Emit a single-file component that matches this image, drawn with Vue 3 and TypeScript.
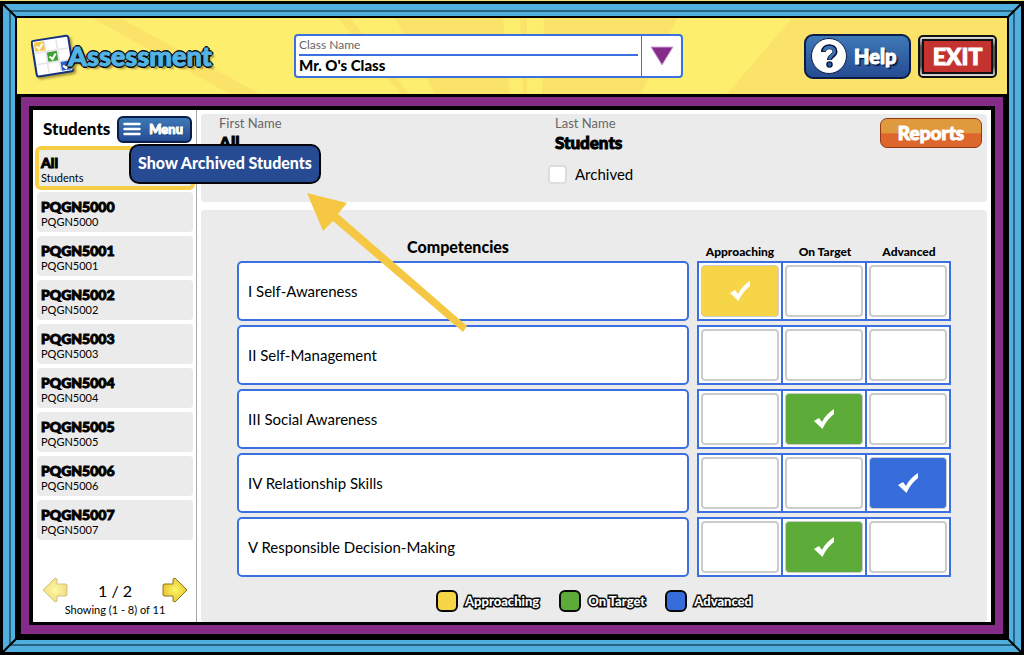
<script setup lang="ts">
import { ref } from 'vue'

type Level = 'approaching' | 'target' | 'advanced'

interface Competency {
  name: string
  level: Level | null
}

const levels: { id: Level; label: string }[] = [
  { id: 'approaching', label: 'Approaching' },
  { id: 'target', label: 'On Target' },
  { id: 'advanced', label: 'Advanced' },
]

const competencies = ref<Competency[]>([
  { name: 'I Self-Awareness', level: 'approaching' },
  { name: 'II Self-Management', level: null },
  { name: 'III Social Awareness', level: 'target' },
  { name: 'IV Relationship Skills', level: 'advanced' },
  { name: 'V Responsible Decision-Making', level: 'target' },
])

const students = [
  { first: 'All', last: 'Students' },
  ...Array.from({ length: 8 }, (_, i) => ({ first: `PQGN500${i}`, last: `PQGN500${i}` })),
]

const selected = ref(0)
const menuOpen = ref(true)
const archived = ref(false)
const corners = ['tl', 'tr', 'bl', 'br']
</script>

<template>
  <div class="screen">
    <div class="frame">
      <svg v-for="c in corners" :key="c" class="corner" :class="c" viewBox="0 0 14 14" aria-hidden="true">
        <path d="M0 0L14 14" stroke="#000" stroke-width="2" />
      </svg>

      <header class="top">
        <svg class="rays" viewBox="0 0 990 77" preserveAspectRatio="none" aria-hidden="true">
          <g fill="#fbe36a">
            <path d="M75 0H103L243 77H213Z" />
            <path d="M321 0H333L392 77H384Z" />
            <path d="M378 0H486L493 77H418Z" />
            <path d="M503 0H510V77H506Z" />
            <path d="M527 0H660L624 77H525Z" />
            <path d="M775 0H990V77H710Z" />
          </g>
        </svg>
        <h1 class="logo">
          <svg class="logo-card" width="46" height="46" viewBox="0 0 46 46" aria-hidden="true">
            <g transform="rotate(-9 22 23)">
              <rect x="3" y="5" width="37" height="36" rx="2" fill="#fff" stroke="#17327c" stroke-width="2" />
              <path d="M15.500 7V39M27.500 7V39M5 17.500H38M5 29H38" stroke="#e4e4e8" stroke-width="1.500" />
              <rect x="5" y="7" width="10" height="9" fill="#f6c944" />
              <rect x="16.500" y="18.500" width="10" height="9.500" fill="#3da035" />
              <rect x="28.500" y="30" width="10" height="9" fill="#2b5fd0" />
              <g fill="none" stroke="#fff" stroke-width="2">
                <path d="M7 11l2.500 3 4-5" />
                <path d="M18.500 23l2.500 3 4-5" />
                <path d="M30.500 34l2.500 3 4-5" />
              </g>
            </g>
          </svg>
          <span class="logo-text">Assessment</span>
        </h1>

        <div class="picker">
          <div class="picker-main">
            <label for="class-select">Class Name</label>
            <select id="class-select">
              <option>Mr. O's Class</option>
            </select>
          </div>
          <div class="picker-arrow" aria-hidden="true">
            <svg width="24" height="20" viewBox="0 0 24 20">
              <path d="M1 1H23L12 19Z" fill="#852c88" stroke="#cfa3dc" stroke-width="1" />
            </svg>
          </div>
        </div>

        <div class="actions">
          <button class="help" type="button">
            <svg width="36" height="36" viewBox="0 0 36 36" aria-hidden="true">
              <circle cx="18" cy="18" r="17.500" fill="#fff" stroke="#0c1c48" />
              <path d="M12.500 14C12.500 7 24 7 24 13.500C24 18 18.500 17.500 18.500 22" fill="none" stroke="#0c1638" stroke-width="5" />
              <path d="M13.200 13.200C14 8 23.500 8 23.500 13.500C23.500 17 18.500 17 18.500 21.500" fill="none" stroke="#3a72b5" stroke-width="3" />
              <circle cx="18.500" cy="26.500" r="2.600" fill="#2b5aa8" stroke="#0c1638" stroke-width="1.300" />
            </svg>
            <span>Help</span>
          </button>
          <button class="exit" type="button"><span>EXIT</span></button>
        </div>
      </header>

      <div class="stage">
        <div class="board">
          <aside class="sidebar">
            <div class="side-head">
              <h2>Students</h2>
              <div class="menu-wrap">
                <button class="menu" type="button" :aria-expanded="menuOpen" @click="menuOpen = !menuOpen">
                  <svg width="18" height="14" viewBox="0 0 18 14" aria-hidden="true">
                    <path d="M1.500 2H16.500M1.500 7H16.500M1.500 12H16.500" stroke="#fff" stroke-width="2.500" stroke-linecap="round" />
                  </svg>
                  <span>Menu</span>
                </button>
                <button v-if="menuOpen" class="menu-item" type="button">Show Archived Students</button>
              </div>
            </div>
            <ul class="students">
              <li v-for="(s, i) in students" :key="s.first">
                <button type="button" class="student" :class="{ on: i === selected }" @click="selected = i">
                  <strong>{{ s.first }}</strong>
                  <span>{{ s.last }}</span>
                </button>
              </li>
            </ul>
            <nav class="pager" aria-label="Student pages">
              <div class="pager-row">
                <button type="button" disabled aria-label="Previous page">
                  <svg width="26" height="26" viewBox="0 0 26 26" aria-hidden="true">
                    <path d="M1 13L13 1L15 2V7H24L25 8V18L24 19H15V24L13 25Z" fill="url(#gold)" stroke="#b29a35" stroke-linejoin="round" />
                  </svg>
                </button>
                <span>1 / 2</span>
                <button type="button" aria-label="Next page">
                  <svg width="26" height="26" viewBox="0 0 26 26" aria-hidden="true">
                    <defs>
                      <radialGradient id="gold">
                        <stop offset="0" stop-color="#fbf56a" />
                        <stop offset="1" stop-color="#e9c72f" />
                      </radialGradient>
                    </defs>
                    <path d="M25 13L13 1L11 2V7H2L1 8V18L2 19H11V24L13 25Z" fill="url(#gold)" stroke="#8e7426" stroke-linejoin="round" />
                  </svg>
                </button>
              </div>
              <p>Showing (1 - 8) of 11</p>
            </nav>
          </aside>

          <main class="content">
            <section class="panel profile">
              <dl>
                <dt>First Name</dt>
                <dd>All</dd>
              </dl>
              <div class="last">
                <dl>
                  <dt>Last Name</dt>
                  <dd>Students</dd>
                </dl>
                <label class="archived">
                  <input v-model="archived" type="checkbox" />
                  <span>Archived</span>
                </label>
              </div>
              <button class="reports" type="button">Reports</button>
            </section>

            <section class="panel ratings">
              <table>
                <colgroup>
                  <col />
                  <col class="col-first" />
                  <col class="col-level" />
                  <col class="col-level" />
                </colgroup>
                <thead>
                  <tr>
                    <th class="comp-head" scope="col">Competencies</th>
                    <th v-for="l in levels" :key="l.id" class="level-head" scope="col">{{ l.label }}</th>
                  </tr>
                </thead>
                <tbody>
                  <tr v-for="(c, r) in competencies" :key="c.name">
                    <th class="comp" scope="row"><div>{{ c.name }}</div></th>
                    <td v-for="l in levels" :key="l.id">
                      <label class="cell">
                        <input
                          v-model="c.level"
                          type="radio"
                          :name="`competency-${r}`"
                          :value="l.id"
                          :class="l.id"
                          :aria-label="`${c.name}: ${l.label}`"
                        />
                        <svg v-if="c.level === l.id" width="20" height="20" viewBox="0 0 20 20" aria-hidden="true">
                          <path d="M0 12L5 9L8 13C11 7 15 3 20 0V5C15 9 11 14 8.500 20Z" fill="#fff" />
                        </svg>
                      </label>
                    </td>
                  </tr>
                </tbody>
              </table>
              <ul class="legend">
                <li v-for="l in levels" :key="l.id">
                  <i :class="l.id"></i>
                  <span>{{ l.label }}</span>
                </li>
              </ul>
            </section>
          </main>
          <svg class="pointer" width="162" height="142" viewBox="0 0 162 142" aria-hidden="true">
            <path d="M0 0L40 10L31 21L160 133L156 139L26 28L16 38Z" fill="#f5c742" />
          </svg>
        </div>
      </div>
    </div>
  </div>
</template>

<style>
body {
  margin: 0;
  background: #000;
}
</style>

<style scoped>
* {
  box-sizing: border-box;
}

.screen {
  min-height: 100vh;
  display: flex;
  padding: 3px;
  border-top: 1px solid #f0e27a;
  background: #000;
  color: #000;
  font-family: Lato, "Liberation Sans", sans-serif;
  font-variant-ligatures: none;
}

button,
select,
input {
  font-family: inherit;
  margin: 0;
}

h1,
h2,
p,
ul,
dl,
dd {
  margin: 0;
  padding: 0;
}

ul {
  list-style: none;
}

.frame {
  position: relative;
  flex: 1;
  display: flex;
  flex-direction: column;
  padding: 14px 14px 12px;
  background: #000;
  box-shadow: inset 0 0 0 6px #4fb0e0, inset 0 0 0 8px #2b6482, inset 0 0 0 12px #4fb0e0;
}

.corner {
  position: absolute;
  width: 14px;
  height: 14px;
}

.tl { top: 0; left: 0; }
.tr { top: 0; right: 0; transform: scaleX(-1); }
.bl { bottom: 0; left: 0; transform: scaleY(-1); }
.br { bottom: 0; right: 0; }

.top {
  position: relative;
  display: grid;
  grid-template-columns: 263px minmax(0, 389px) 1fr;
  align-items: center;
  height: 76px;
  padding: 0 10px 0 14px;
  background: #fdee6e;
}

.rays {
  position: absolute;
  inset: 0;
  width: 100%;
  height: 100%;
}

.logo,
.picker,
.actions {
  position: relative;
}

.logo {
  display: flex;
  align-items: center;
}

.logo-card {
  flex: none;
  filter: drop-shadow(2px 2px 1px #a8983c);
}

.logo-text {
  position: relative;
  margin-left: -9px;
  font-size: 27px;
  line-height: 36px;
  font-weight: 900;
  color: #53b4e4;
  -webkit-text-stroke: 1px #53b4e4;
  text-shadow: 2px 0 #0a0a14, -2px 0 #0a0a14, 0 2px #0a0a14, 0 -2px #0a0a14, 1px 1px #0a0a14,
    -1px 1px #0a0a14, 1px -1px #0a0a14, -1px -1px #0a0a14, 3px 3px 2px #a8983c;
}

.picker {
  display: flex;
  height: 44px;
  border: 2px solid #3c6fe0;
  border-radius: 4px;
  background: #fff;
}

.picker-main {
  flex: 1;
  display: flex;
  flex-direction: column;
  padding: 0 3px;
}

.picker-main label {
  height: 18px;
  font-size: 12px;
  line-height: 18px;
  color: #666;
}

.picker-main select {
  flex: 1;
  appearance: none;
  border: 0;
  border-top: 2px solid #3c6fe0;
  padding: 0 0 2px;
  background: transparent;
  color: #000;
  font-size: 15px;
  font-weight: 900;
}

.picker-arrow {
  display: flex;
  align-items: center;
  justify-content: center;
  width: 40px;
  border-left: 1px solid #3c6fe0;
}

.actions {
  display: flex;
  justify-content: flex-end;
  align-items: center;
  gap: 7px;
}

.help {
  display: flex;
  align-items: center;
  gap: 7px;
  width: 107px;
  height: 45px;
  padding: 0 5px;
  border: 2px solid #0c1c48;
  border-radius: 9px;
  background: linear-gradient(#3e79b7, #264b92);
  color: #fff;
  font-size: 20px;
  font-weight: 900;
}

.help span,
.menu span,
.reports,
.exit {
  -webkit-text-stroke: 1px #fff;
}

.help span {
  text-shadow: 2px 2px 1px #0b1a40;
}

.exit {
  width: 79px;
  height: 43px;
  padding: 2px;
  border: 2px solid #111;
  border-radius: 5px;
  background: linear-gradient(#e0e0e0, #555 25%, #555 75%, #e0e0e0);
  color: #fff;
  font-size: 23px;
  font-weight: 900;
}

.exit span {
  display: flex;
  align-items: center;
  justify-content: center;
  height: 100%;
  border: 2px solid #111;
  background: #c4332f;
}

.stage {
  flex: 1;
  display: flex;
  padding: 3px 4px 6px;
}

.board {
  position: relative;
  flex: 1;
  display: flex;
  border: solid #852c88;
  border-width: 9px 8px;
  padding: 4px 4px 3px;
}

.sidebar {
  flex: none;
  width: 164px;
  display: flex;
  flex-direction: column;
  padding: 5px 3px 0 4px;
  border-right: 1px solid #aaa;
  background: #fff;
}

.side-head {
  display: flex;
  align-items: center;
  justify-content: space-between;
  height: 28px;
  padding: 0 1px 0 6px;
}

.side-head h2 {
  font-size: 17px;
  line-height: 20px;
  font-weight: 900;
}

.menu-wrap {
  position: relative;
}

.menu {
  display: flex;
  align-items: center;
  justify-content: space-between;
  width: 75px;
  height: 27px;
  padding: 0 7px 0 4px;
  border: 2px solid #0c1c48;
  border-radius: 6px;
  background: linear-gradient(#3e79b7, #264b92);
  color: #fff;
  font-size: 13px;
  font-weight: 900;
}

.menu span {
  text-shadow: 1px 1px 1px #0b1a40;
}

.menu-item {
  position: absolute;
  z-index: 2;
  top: 28px;
  left: 12px;
  height: 40px;
  padding: 0 7px 2px;
  border: 2px solid #05060c;
  border-radius: 10px;
  background: #264b92;
  color: #fff;
  font-size: 16px;
  font-weight: 900;
  white-space: nowrap;
}

.students {
  display: flex;
  flex-direction: column;
  gap: 4px;
  margin-top: 5px;
}

.student {
  display: flex;
  flex-direction: column;
  justify-content: center;
  width: 100%;
  height: 40px;
  padding: 2px 4px 0;
  border: 0;
  border-radius: 4px;
  background: #ebebeb;
  color: #000;
  text-align: left;
}

.student.on {
  box-shadow: 0 0 0 2px #f6ce46, inset 0 0 0 2px #f6ce46;
}

.student strong,
dd {
  font-size: 14px;
  line-height: 17px;
  font-weight: 900;
  -webkit-text-stroke: 1px #000;
}

.student span {
  font-size: 11px;
  line-height: 14px;
}

.pager {
  margin-top: auto;
  padding: 0 5px 5px;
  text-align: center;
}

.pager-row {
  display: flex;
  align-items: center;
  justify-content: space-between;
  font-size: 16px;
}

.pager button {
  height: 26px;
  padding: 0;
  border: 0;
  background: none;
}

.pager button:disabled {
  opacity: 0.6;
}

.pager p {
  font-size: 11px;
  line-height: 14px;
}

.content {
  flex: 1;
  display: flex;
  flex-direction: column;
  gap: 8px;
  min-width: 0;
  padding: 4px 4px 0;
  background: #fff;
}

.panel {
  border-radius: 4px;
  background: #ebebeb;
}

.profile {
  display: grid;
  grid-template-columns: 336px 1fr auto;
  align-items: start;
  height: 88px;
  padding: 0 5px 0 18px;
}

dt {
  font-size: 13px;
  line-height: 19px;
  color: #666;
}

.profile dd {
  font-size: 17px;
  line-height: 19px;
}

.archived {
  display: flex;
  align-items: center;
  gap: 8px;
  margin: 12px 0 0 -7px;
  font-size: 15px;
  line-height: 20px;
}

.archived input {
  appearance: none;
  width: 19px;
  height: 19px;
  border: 2px solid #ddd;
  border-radius: 4px;
  background: #fff;
}

.reports {
  width: 102px;
  height: 30px;
  margin-top: 4px;
  padding: 0 0 2px;
  border: 1px solid #8f3a15;
  border-radius: 7px;
  background: linear-gradient(#df9a3e 0 48%, #dc662c 54%);
  color: #fff;
  font-size: 19px;
  font-weight: 900;
}

.ratings {
  flex: 1;
  padding: 22px 36px 9px;
}

table {
  width: 100%;
  border-spacing: 0 4px;
  table-layout: fixed;
}

.col-first {
  width: 86px;
}

.col-level {
  width: 84px;
}

thead th {
  padding: 0;
  vertical-align: bottom;
}

.comp-head {
  padding: 0 18px 0 0;
  font-size: 16px;
  line-height: 21px;
  font-weight: 900;
}

.level-head {
  font-size: 12px;
  line-height: 11px;
  font-weight: 900;
}

.comp {
  padding: 0 8px 0 0;
  text-align: left;
  font-size: 15px;
  font-weight: 400;
}

.comp div {
  display: flex;
  align-items: center;
  height: 60px;
  padding: 0 9px;
  border: 2px solid #3c6fe0;
  border-radius: 5px;
  background: #fff;
}

td {
  padding: 2px;
  border: 2px solid #3c6fe0;
  border-left-width: 0;
  background: #fff;
}

th + td {
  border-left-width: 2px;
}

.cell {
  position: relative;
  display: flex;
  height: 52px;
}

.cell input {
  appearance: none;
  width: 100%;
  height: 100%;
  border: 2px solid #ccc;
  border-radius: 4px;
  background: #fff;
}

.cell input:checked {
  border-width: 1px;
}

.cell svg {
  position: absolute;
  inset: 0;
  margin: auto;
  pointer-events: none;
}

.cell input.approaching:checked,
.legend .approaching {
  background: #f7d548;
}

.cell input.target:checked,
.legend .target {
  background: #5dab38;
}

.cell input.advanced:checked,
.legend .advanced {
  background: #376cdb;
}

.legend {
  display: flex;
  justify-content: center;
  gap: 20px;
  margin-top: 9px;
}

.legend li {
  display: flex;
  align-items: center;
  gap: 7px;
}

.legend i {
  width: 22px;
  height: 22px;
  border: 2px solid #0a0a0a;
  border-radius: 6px;
}

.legend span {
  font-size: 13px;
  font-weight: 900;
  color: #fff;
  -webkit-text-stroke: 3px #0a0a0a;
  paint-order: stroke fill;
}

.pointer {
  position: absolute;
  top: 87px;
  left: 278px;
}
</style>
